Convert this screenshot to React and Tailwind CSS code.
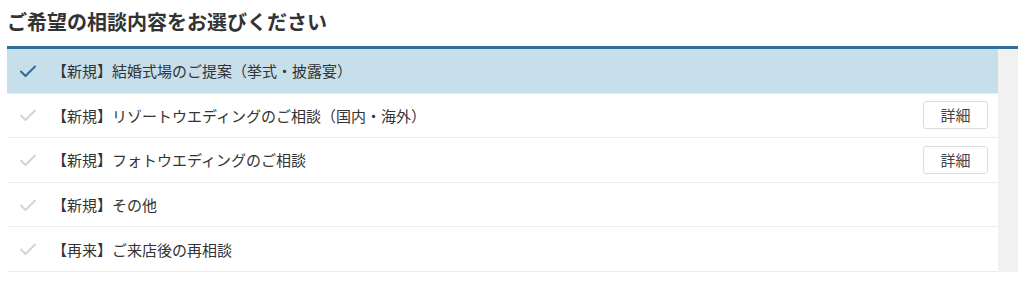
import { useState } from 'react';

const options = [
    { id: 1, label: '【新規】結婚式場のご提案（挙式・披露宴）', detail: false },
    { id: 2, label: '【新規】リゾートウエディングのご相談（国内・海外）', detail: true },
    { id: 3, label: '【新規】フォトウエディングのご相談', detail: true },
    { id: 4, label: '【新規】その他', detail: false },
    { id: 5, label: '【再来】ご来店後の再相談', detail: false },
];

function Check({ active }) {
    return (
        <svg width="18" height="14" viewBox="0 0 18 14" fill="none">
            <path
                d="M2 7.5 L6.5 12 L16 2.5"
                stroke={active ? '#2b6c9a' : '#d4d4d4'}
                strokeWidth="2"
                strokeLinecap="round"
                strokeLinejoin="round"
            />
        </svg>
    );
}

export default function App() {
    const [selected, setSelected] = useState(1);

    return (
        <div className="bg-white px-[7px] pt-[9px] text-[#333]" style={{ fontFamily: '"Noto Sans CJK JP", "Noto Sans", sans-serif' }}>
            <h2 className="text-[20px] font-bold leading-[26px] mb-[11px]">ご希望の相談内容をお選びください</h2>

            <div className="w-[1011px] border-t-[3px] border-[#2f6f98] flex">
                <ul className="flex-1">
                    {options.map((opt) => {
                        const active = opt.id === selected;
                        return (
                            <li
                                key={opt.id}
                                onClick={() => setSelected(opt.id)}
                                className={`h-[44.6px] flex items-center border-b border-[#ececec] cursor-pointer ${active ? 'bg-[#c7dfeb]' : 'bg-white'}`}
                            >
                                <span className="w-[38px] pl-[12px] flex items-center">
                                    <Check active={active} />
                                </span>
                                <span className="flex-1 pl-[7px] text-[15px] leading-none">{opt.label}</span>
                                {opt.detail && (
                                    <button className="mr-[10px] w-[65px] h-[28px] rounded-[3px] border border-[#dcdcdc] bg-white text-[15px] text-[#444]">
                                        詳細
                                    </button>
                                )}
                            </li>
                        );
                    })}
                </ul>
                <div className="w-[20px] bg-[#f1f1f1]"></div>
            </div>
        </div>
    );
}
